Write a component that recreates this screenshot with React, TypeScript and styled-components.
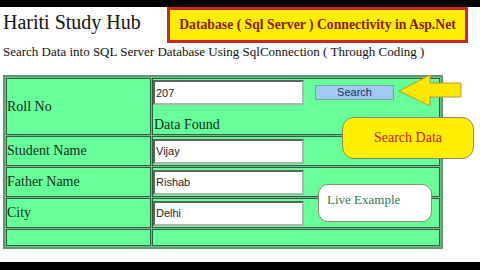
import React from 'react';
import styled, { createGlobalStyle } from 'styled-components';

const GlobalStyle = createGlobalStyle`
  html, body {
    margin: 0;
    padding: 0;
    background: #ffffff;
  }
  body {
    font-family: "Liberation Serif", "Times New Roman", serif;
    color: #111;
  }
`;

const Page = styled.div`
  position: relative;
  width: 480px;
  height: 270px;
  display: flex;
  flex-direction: column;
  overflow: hidden;
  background: #fff;
`;

const Bar = styled.div<{ $h: number }>`
  height: ${(p) => p.$h}px;
  background: #000;
  flex-shrink: 0;
`;

const Content = styled.div`
  flex: 1;
  padding: 0 0 0 3px;
  display: flex;
  flex-direction: column;
`;

const Header = styled.header`
  display: flex;
  align-items: flex-start;
  justify-content: space-between;
  padding-right: 12px;
  height: 36px;
`;

const Title = styled.h1`
  margin: 0;
  padding-top: 4px;
  font-size: 20px;
  font-weight: normal;
  color: #111;
`;

const Banner = styled.div`
  width: 295px;
  height: 30px;
  display: flex;
  align-items: center;
  justify-content: center;
  background: #ffee00;
  border: 3px solid #c8262c;
  color: #8a1a10;
  font-size: 13.7px;
  font-weight: bold;
`;

const Subtitle = styled.p`
  margin: 1px 0 0;
  font-size: 13px;
  color: #111;
`;

const Grid = styled.table`
  margin-top: 15px;
  width: 440px;
  border: 2px solid #5c9a70;
  border-spacing: 1px;
  background: #7fb890;
`;

const Cell = styled.td<{ $h: number; $w?: number }>`
  height: ${(p) => p.$h}px;
  width: ${(p) => (p.$w ? `${p.$w}px` : 'auto')};
  padding: 0;
  background: #66ff99;
  border: 1px solid #2f5e3c;
  font-size: 14px;
  color: #1a2a1a;
  vertical-align: middle;
`;

const FieldRow = styled.div`
  display: flex;
  align-items: center;
  gap: 11px;
`;

const Field = styled.input`
  width: 151px;
  height: 25px;
  box-sizing: border-box;
  border: 2px inset #a8b8a8;
  background: #fff;
  font-family: "Liberation Sans", Arial, sans-serif;
  font-size: 11px;
  color: #222;
  padding: 0 1px;
  margin: 0;
`;

const SearchButton = styled.button`
  width: 79px;
  height: 15px;
  padding: 0;
  border: 1px solid #8a9aaa;
  background: #9fcaf4;
  font-family: "Liberation Sans", Arial, sans-serif;
  font-size: 11px;
  color: #1c2c55;
  line-height: 13px;
`;

const Status = styled.div`
  margin-top: 12px;
  padding-left: 1px;
  font-size: 14px;
`;

const Arrow = styled.svg`
  position: absolute;
  left: 398px;
  top: 74px;
`;

const Callout = styled.div<{ $bg: string; $fg: string }>`
  position: absolute;
  display: flex;
  align-items: center;
  background: ${(p) => p.$bg};
  color: ${(p) => p.$fg};
  border: 1px solid #8a8a70;
  border-radius: 12px;
  font-size: 14px;
`;

const SearchCallout = styled(Callout)`
  left: 342px;
  top: 117px;
  width: 130px;
  height: 40px;
  justify-content: center;
`;

const LiveCallout = styled(Callout)`
  left: 318px;
  top: 184px;
  width: 114px;
  height: 38px;
  padding-left: 8px;
  padding-bottom: 7px;
  box-sizing: border-box;
  border-radius: 10px;
  font-size: 13px;
`;

const rows = [
  { label: 'Student Name', value: 'Vijay' },
  { label: 'Father Name', value: 'Rishab' },
  { label: 'City', value: 'Delhi' },
];

export default function App() {
  return (
    <Page>
      <GlobalStyle />
      <Bar $h={7} />
      <Content>
        <Header>
          <Title>Hariti Study Hub</Title>
          <Banner>Database ( Sql Server ) Connectivity in Asp.Net</Banner>
        </Header>
        <Subtitle>Search Data into SQL Server Database Using SqlConnection ( Through Coding )</Subtitle>
        <Grid>
          <tbody>
            <tr>
              <Cell $h={55} $w={143}>
                Roll No
              </Cell>
              <Cell $h={55}>
                <FieldRow>
                  <Field defaultValue="207" />
                  <SearchButton>Search</SearchButton>
                </FieldRow>
                <Status>Data Found</Status>
              </Cell>
            </tr>
            {rows.map((r) => (
              <tr key={r.label}>
                <Cell $h={28}>{r.label}</Cell>
                <Cell $h={28}>
                  <Field defaultValue={r.value} />
                </Cell>
              </tr>
            ))}
            <tr>
              <Cell $h={15} />
              <Cell $h={15} />
            </tr>
          </tbody>
        </Grid>
      </Content>
      <Bar $h={8} />
      <Arrow width="66" height="34" viewBox="0 0 66 34">
        <polygon
          points="1,17 32,1 32,9 63,9 63,23 32,23 32,32"
          fill="#ffe800"
          stroke="#b09a40"
          strokeWidth="1"
        />
      </Arrow>
      <SearchCallout $bg="#ffee00" $fg="#c0241c">Search Data</SearchCallout>
      <LiveCallout $bg="#ffffff" $fg="#2e7a50">Live Example</LiveCallout>
    </Page>
  );
}
